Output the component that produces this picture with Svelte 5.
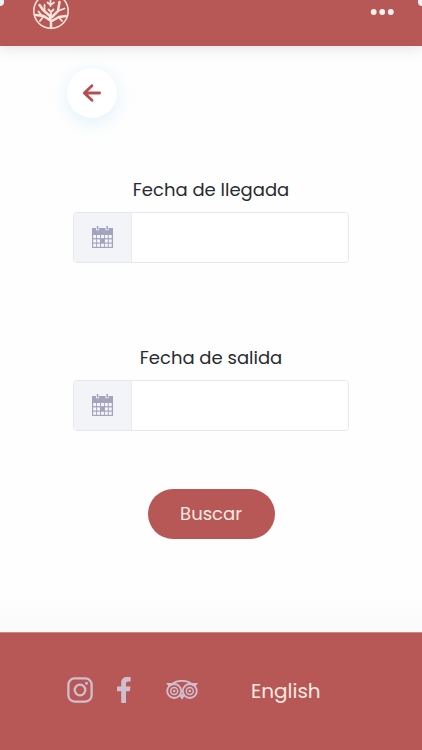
<script lang="ts">
	const fields = [
		{ id: "checkin", label: "Fecha de llegada" },
		{ id: "checkout", label: "Fecha de salida" },
	];

	let dates: Record<string, string> = $state({ checkin: "", checkout: "" });
</script>

<div class="page">
	<header>
		<span class="edge left"></span>
		<span class="edge right"></span>
		<svg class="logo" width="38" height="38" viewBox="0 0 38 38" fill="none" stroke="#fbe6de" stroke-linecap="round">
			<circle cx="19" cy="19" r="17.2" stroke-width="1.5" />
			<path d="M19 36V29L11.5 24L4 23M19 29.5L27 25L34 24M18.5 28L18 24L11 18L7.5 13M20 25L26 19L27.5 10" stroke-width="2.5" />
			<path d="M10 24L6.5 19.5M12.5 19V13M19 23V20L16.5 17.5M19 20L21.5 17.5M18.5 14V8M18.5 13L15.5 10.5M18.5 13L22 10.5M26 19L32.5 16.5M11 25L8 29M27 25.5L30 29" stroke-width="1.8" />
		</svg>
		<button class="menu" aria-label="Menu">
			<svg width="24" height="8" viewBox="0 0 24 8" fill="#fff3ed">
				<circle cx="3.7" cy="4" r="2.9" />
				<circle cx="12.2" cy="4" r="2.9" />
				<circle cx="20.8" cy="4" r="2.9" />
			</svg>
		</button>
	</header>

	<main>
		<button class="back" aria-label="Volver">
			<svg width="20" height="20" viewBox="0 0 20 20" fill="none" stroke="#b54f52" stroke-width="2.8" stroke-linecap="round" stroke-linejoin="round">
				<path d="M10 2.7L2.3 10L10 17.3M2.7 10H17.6" />
			</svg>
		</button>

		<form onsubmit={(e) => e.preventDefault()}>
			{#each fields as field}
				<div class="field">
					<label for={field.id}>{field.label}</label>
					<div class="group">
						<span class="addon">
							<svg width="21" height="22" viewBox="0 0 21 22">
								<path fill="#a4a3be" d="M0 2h4v2.3h3V2h6.5v2.3h3V2H21v20H0z" />
								<path fill="#a4a3be" d="M4.8 0h1.6v3.5H4.8zM14.4 0H16v3.5h-1.6z" />
								{#each [9, 13.4, 17.7] as y, row}
									{#each [1.2, 5.1, 9, 12.9, 16.8] as x, col}
										{#if !(row === 1 && col === 2)}
											<rect {x} {y} width="2.9" height="3.1" fill="#f7f7fb" />
										{/if}
									{/each}
								{/each}
							</svg>
						</span>
						<input id={field.id} type="text" bind:value={dates[field.id]} />
					</div>
				</div>
			{/each}
			<button class="search" type="submit">Buscar</button>
		</form>
	</main>

	<footer>
		<svg class="instagram" width="26" height="26" viewBox="0 0 26 26" fill="none" stroke="#d0bfd0" stroke-width="2.3">
			<rect x="1.4" y="1.4" width="23.2" height="23.2" rx="6.2" />
			<circle cx="13" cy="13" r="5.3" />
			<circle cx="19.5" cy="6.3" r="1.5" fill="#d0bfd0" stroke="none" />
		</svg>
		<svg class="facebook" width="14" height="26" viewBox="0 0 14 26" fill="#d0bfd0">
			<path d="M4.2 26V14.2H0V9.6h4.2V6C4.2 1.9 6.6 0 10.2 0c1.7 0 3 .2 3.5.3v4.1h-2.2c-2 0-2.5 1-2.5 2.5v2.7h4.5l-.7 4.6H9V26z" />
		</svg>
		<svg class="tripadvisor" width="32" height="20" viewBox="0 0 32 20" fill="none" stroke="#d0bfd0">
			<path d="M7 3.3C12 0 20 0 25 3.3" stroke-width="1.8" />
			<path d="M0 3h6.5L9 4 2.8 6.5zM32 3h-6.5L23 4l6.2 2.5zM13.5 16L16 19.8 18.5 16 16 13.5z" fill="#d0bfd0" stroke="none" />
			<circle cx="8.2" cy="11" r="7" stroke-width="1.8" />
			<circle cx="23.8" cy="11" r="7" stroke-width="1.8" />
			<circle cx="8.2" cy="11" r="3.5" stroke-width="1.5" />
			<circle cx="23.8" cy="11" r="3.5" stroke-width="1.5" />
			<circle cx="8.2" cy="11" r="1.3" fill="#d0bfd0" stroke="none" />
			<circle cx="23.8" cy="11" r="1.3" fill="#d0bfd0" stroke="none" />
		</svg>
		<a href="#en">English</a>
	</footer>
</div>

<style>
	:global(body) {
		margin: 0;
		background: #fefefe;
	}
	.page {
		display: flex;
		flex-direction: column;
		height: 750px;
		overflow: hidden;
		font-family: Poppins, Inter, sans-serif;
		color: #292b2f;
	}
	button {
		padding: 0;
		border: none;
		font-family: inherit;
	}
	header {
		position: relative;
		display: flex;
		justify-content: space-between;
		flex: none;
		height: 46px;
		padding: 0 28px 0 32px;
		box-sizing: border-box;
		background: #b75856;
		box-shadow: 0 1px 16px rgba(60, 60, 60, 0.16);
	}
	.edge {
		position: absolute;
		top: 0;
		width: 4px;
		height: 6px;
		background: #eef0f5;
	}
	.left {
		left: 0;
		border-radius: 0 0 4px 0;
	}
	.right {
		right: 0;
		border-radius: 0 0 0 4px;
	}
	.logo {
		margin-top: -8px;
	}
	.menu {
		height: 24px;
		background: none;
	}
	.menu svg {
		display: block;
	}
	main {
		flex: none;
		height: 587px;
		padding: 22px 73px 0;
		box-sizing: border-box;
		background: linear-gradient(transparent 94%, #fafafa);
	}
	.back {
		display: flex;
		align-items: center;
		justify-content: center;
		width: 50px;
		height: 50px;
		margin-left: -6px;
		border-radius: 50%;
		background: #fff;
		box-shadow: 0 4px 18px rgba(165, 215, 240, 0.35);
	}
	form {
		display: flex;
		flex-direction: column;
		align-items: center;
		padding-top: 58px;
	}
	.field {
		width: 276px;
		height: 168px;
	}
	label {
		display: block;
		height: 36px;
		font-size: 18px;
		line-height: 27px;
		text-align: center;
	}
	.group {
		display: flex;
		height: 51px;
		box-sizing: border-box;
		border: 1px solid #e6e8ec;
		border-radius: 4px;
		overflow: hidden;
		background: #fff;
	}
	.addon {
		display: flex;
		flex: none;
		align-items: center;
		justify-content: center;
		width: 58px;
		box-sizing: border-box;
		border-right: 1px solid #e8eaee;
		background: #f3f4f7;
	}
	.addon svg {
		margin-top: -2px;
	}
	input {
		flex: 1;
		min-width: 0;
		padding: 0 12px;
		border: none;
		outline: none;
		font: inherit;
	}
	.search {
		width: 127px;
		height: 50px;
		margin-top: -23px;
		padding-bottom: 1px;
		border-radius: 25px;
		background: #b75856;
		color: #fdebe4;
		font-size: 18px;
	}
	footer {
		display: flex;
		flex: 1;
		align-items: flex-start;
		padding: 44px 0 0 67px;
		background: #b75856;
		border-top: 1px solid #c98786;
		margin-top: -1px;
	}
	.facebook {
		margin: 0 0 0 24px;
	}
	.tripadvisor {
		margin: 3px 0 0 35px;
	}
	a {
		margin: 1px 0 0 53px;
		color: #fdebe4;
		font-size: 20px;
		line-height: 26px;
		text-decoration: none;
	}
</style>
